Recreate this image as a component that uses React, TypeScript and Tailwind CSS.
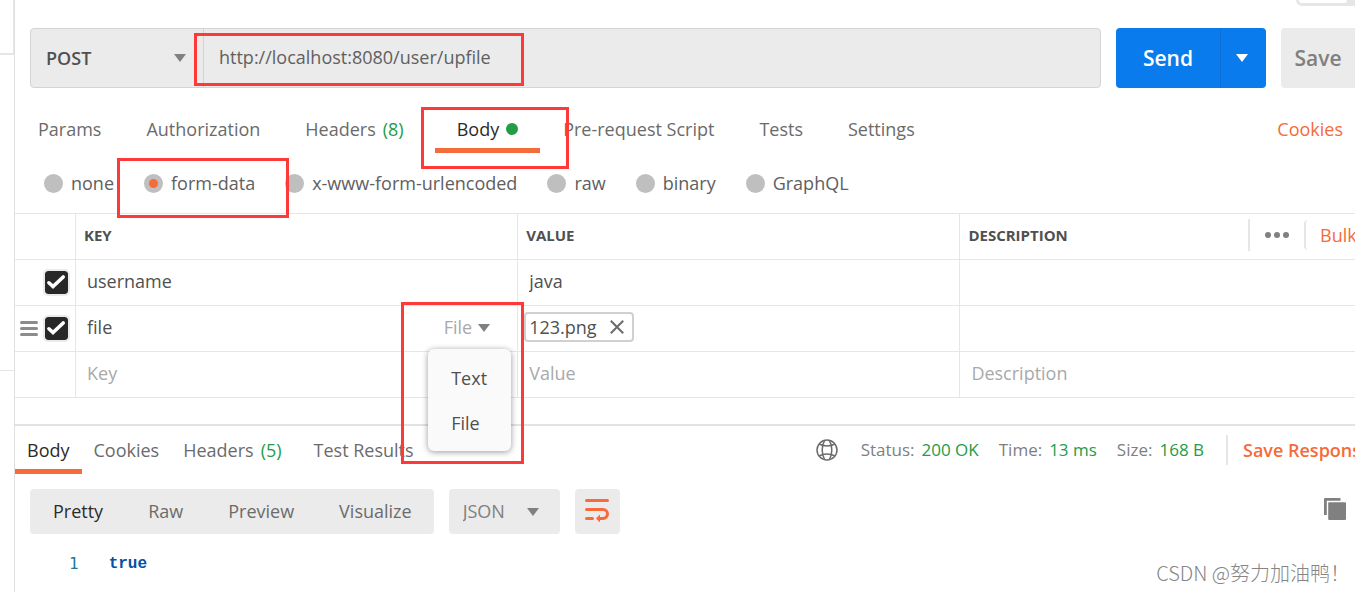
import { useState } from "react";
import type { ReactNode } from "react";

const requestTabs = [
  { label: "Params" },
  { label: "Authorization" },
  { label: "Headers", count: 8 },
  { label: "Body", dot: true },
  { label: "Pre-request Script" },
  { label: "Tests" },
  { label: "Settings" },
];

const bodyModes = ["none", "form-data", "x-www-form-urlencoded", "raw", "binary", "GraphQL"];

const responseTabs = [
  { label: "Body" },
  { label: "Cookies" },
  { label: "Headers", count: 5 },
  { label: "Test Results" },
];

const stats = [
  { label: "Status:", value: "200 OK" },
  { label: "Time:", value: "13 ms" },
  { label: "Size:", value: "168 B" },
];

const views = ["Pretty", "Raw", "Preview", "Visualize"];

function Caret({ className = "" }: { className?: string }) {
  return (
    <svg viewBox="0 0 12 8" className={`h-2 w-3 shrink-0 ${className}`} aria-hidden="true">
      <path d="M0 0h12L6 8z" fill="currentColor" />
    </svg>
  );
}

function Mark({ className }: { className: string }) {
  return (
    <div
      aria-hidden="true"
      className={`pointer-events-none absolute z-20 border-3 border-[#ff3838] ${className}`}
    />
  );
}

function GlobeIcon() {
  return (
    <svg
      viewBox="0 0 22 22"
      className="size-[22px] shrink-0"
      fill="none"
      stroke="#6b6b6b"
      strokeWidth="1.5"
      aria-hidden="true"
    >
      <circle cx="11" cy="11" r="10" />
      <path d="M8.600 1.300C5.400 7 5.400 15 8.600 20.700M13.400 1.300c3.200 5.700 3.200 13.700 0 19.400" />
      <path d="M2.800 5c4.800 2.200 11.600 2.200 16.400 0M2.800 17c4.800-2.200 11.600-2.200 16.400 0" />
    </svg>
  );
}

function WrapIcon() {
  return (
    <svg viewBox="0 0 24 24" className="size-6" fill="none" stroke="#f76b3a" strokeWidth="3" strokeLinecap="round">
      <path d="M1.500 2.500h21M1.500 11.500h16.500a4.500 4.500 0 0 1 0 9h-3M1.500 20.500h6" />
      <path d="M11 20.500l4-4v8z" fill="#f76b3a" stroke="none" />
    </svg>
  );
}

function CopyIcon() {
  return (
    <svg viewBox="0 0 22 22" className="size-[22px]" fill="#808080">
      <path d="M1 0h15.500v2.800H2.800v14.200H0V1a1 1 0 0 1 1-1z" />
      <rect x="4.200" y="4.200" width="17.800" height="17.800" rx="1" />
    </svg>
  );
}

function RowCheck({ label }: { label: string }) {
  return (
    <label className="relative block size-[23px]">
      <input
        type="checkbox"
        defaultChecked
        aria-label={label}
        className="block size-[23px] appearance-none rounded-[3px] bg-white outline-2 outline-[#ebebeb] checked:bg-[#282828]"
      />
      <svg
        viewBox="0 0 23 23"
        className="pointer-events-none absolute inset-0"
        fill="none"
        stroke="#fff"
        strokeWidth="3.600"
        strokeLinecap="round"
        strokeLinejoin="miter"
      >
        <path d="M3.900 11.800L8 15.600 18.200 6" />
      </svg>
    </label>
  );
}

function Tab({ active, wide, onClick, children }: { active: boolean; wide?: boolean; onClick: () => void; children: ReactNode }) {
  return (
    <button
      type="button"
      onClick={onClick}
      className={`flex h-12 shrink-0 items-center gap-[7px] border-y-5 border-t-transparent whitespace-nowrap ${
        wide ? "px-[22px]" : "px-3"
      } ${active ? "border-b-[#f56b3a] text-[#2b2b2b]" : "border-b-transparent text-[#6b6b6b]"}`}
    >
      {children}
    </button>
  );
}

function Field({ label, value, placeholder }: { label: string; value?: string; placeholder?: string }) {
  return (
    <input
      aria-label={label}
      defaultValue={value}
      placeholder={placeholder}
      className="h-11 w-full bg-transparent pb-1 pl-[11px] outline-none placeholder:text-[#a9a9a9]"
    />
  );
}

function FormTable() {
  const [menuOpen, setMenuOpen] = useState(true);
  const head = "border-y border-l border-[#e6e6e6] pt-0 pr-0 pb-[3px] pl-2 text-left text-[15px] font-bold text-[#505050]";
  const cell = "border-b border-l border-[#e6e6e6] p-0";

  return (
    <table className="w-full table-fixed border-separate border-spacing-0 text-[#505050]">
      <colgroup>
        <col className="w-[60px]" />
        <col className="w-[33%]" />
        <col className="w-[33%]" />
        <col />
      </colgroup>
      <thead>
        <tr className="h-[47px]">
          <th className="border-y border-[#e6e6e6]" />
          <th className={head}>KEY</th>
          <th className={head}>VALUE</th>
          <th className={head}>
            <div className="flex items-center justify-between">
              DESCRIPTION
              <div className="flex w-[107px] shrink-0 items-center overflow-hidden text-lg font-normal">
                <button type="button" aria-label="More" className="flex h-8 w-14 shrink-0 items-center gap-[3px] border-l-2 border-[#e6e6e6] pl-[15px]">
                  <span className="size-[6px] rounded-full bg-[#808080]" />
                  <span className="size-[6px] rounded-full bg-[#808080]" />
                  <span className="size-[6px] rounded-full bg-[#808080]" />
                </button>
                <button type="button" className="h-[30px] shrink-0 rounded border-l-2 border-[#e6e6e6] pl-[14px] whitespace-nowrap text-[#f56b3a]">
                  Bulk Edit
                </button>
              </div>
            </div>
          </th>
        </tr>
      </thead>
      <tbody>
        <tr className="h-[46px]">
          <td className="border-b border-[#e6e6e6] p-0">
            <div className="flex justify-end pr-[7px]">
              <RowCheck label="Enable username" />
            </div>
          </td>
          <td className={cell}><Field label="Key 1" value="username" /></td>
          <td className={cell}><Field label="Value 1" value="java" /></td>
          <td className={cell} />
        </tr>
        <tr className="h-[46px]">
          <td className="border-b border-[#e6e6e6] p-0">
            <div className="flex items-center justify-end gap-[7px] pr-[7px]">
              <span className="flex w-[18px] flex-col gap-[3px]">
                <span className="h-[3px] rounded bg-[#8c8c8c]" />
                <span className="h-[3px] rounded bg-[#8c8c8c]" />
                <span className="h-[3px] rounded bg-[#8c8c8c]" />
              </span>
              <RowCheck label="Enable file" />
            </div>
          </td>
          <td className={`${cell} relative`}>
            <div className="flex items-center">
              <Field label="Key 2" value="file" />
              <button
                type="button"
                aria-expanded={menuOpen}
                onClick={() => setMenuOpen(!menuOpen)}
                className="flex shrink-0 items-center gap-[6px] pr-[27px] pb-1 text-[#a9a9a9]"
              >
                File
                <Caret className="mt-[2px] text-[#808080]" />
              </button>
            </div>
            {menuOpen && (
              <div role="menu" className="absolute top-[43px] right-[6px] z-10 w-[83px] rounded-md bg-[#fafafa] py-[6px] shadow-[0_1px_6px_rgba(0,0,0,0.4)]">
                <button type="button" role="menuitem" className="block h-[45px] w-full pl-[23px] text-left">Text</button>
                <button type="button" role="menuitem" className="block h-[45px] w-full pl-[23px] text-left">File</button>
              </div>
            )}
            <Mark className="-top-[4px] -right-[7px] h-[162px] w-[123px]" />
          </td>
          <td className="border-b border-l border-[#e6e6e6] pt-0 pr-0 pb-[3px] pl-[6px]">
            <div className="flex h-[30px] w-fit items-center gap-[13px] rounded border-2 border-[#d0d0d0] pr-2 pb-px pl-[3px]">
              123.png
              <button type="button" aria-label="Remove file">
                <svg viewBox="0 0 14 14" className="size-[14px]" stroke="#6b6b6b" strokeWidth="2">
                  <path d="M.8.8l12.400 12.400M13.200.8L.8 13.200" />
                </svg>
              </button>
            </div>
          </td>
          <td className={cell} />
        </tr>
        <tr className="h-[46px]">
          <td className="border-b border-[#e6e6e6] p-0" />
          <td className={cell}><Field label="New key" placeholder="Key" /></td>
          <td className={cell}><Field label="New value" placeholder="Value" /></td>
          <td className={cell}><Field label="New description" placeholder="Description" /></td>
        </tr>
      </tbody>
    </table>
  );
}

export default function App() {
  const [tab, setTab] = useState("Body");
  const [mode, setMode] = useState("form-data");
  const [resTab, setResTab] = useState("Body");
  const [view, setView] = useState("Pretty");

  return (
    <div className="relative flex min-h-screen overflow-hidden bg-white font-['Open_Sans',sans-serif] text-lg leading-6">
      <aside className="flex w-[15px] shrink-0 flex-col border-r border-[#e0e0e0]">
        <div className="h-[55px] border-r border-b-2 border-[#e6e6e6]" />
        <div className="h-[316px] border-b border-[#e6e6e6]" />
      </aside>

      <main className="min-w-0 flex-1">
        <div className="flex h-7 items-start justify-end">
          <div className="h-[6px] w-[59px] rounded-bl-md bg-[#e6e6e6] pl-[3px]">
            <div className="h-[3px] w-12 rounded-b bg-white" />
          </div>
        </div>

        <div className="flex gap-[15px] pl-[15px]">
          <div className="relative flex h-[60px] min-w-0 flex-1 rounded border border-[#d4d4d4] bg-[#ebebeb]">
            <div className="relative flex w-[173px] shrink-0 items-center border-r border-[#d4d4d4]">
              <select aria-label="Method" className="h-full w-full appearance-none pl-[15px] font-semibold text-[#505050] outline-none">
                <option>POST</option>
                <option>GET</option>
              </select>
              <Caret className="pointer-events-none absolute right-[17px] text-[#808080]" />
            </div>
            <input
              aria-label="Request URL"
              defaultValue="http://localhost:8080/user/upfile"
              className="min-w-0 flex-1 px-[15px] pb-[2px] text-[#606060] outline-none"
            />
            <Mark className="top-[4px] left-[163px] h-[53px] w-[330px]" />
          </div>
          <div className="flex h-[60px] w-[150px] shrink-0 rounded bg-[#097bed] text-white">
            <button type="button" className="flex-1 text-[21px] font-semibold">Send</button>
            <button type="button" aria-label="Send options" className="flex w-[46px] items-center border-l border-[#0a6fd6] pl-[15px]">
              <Caret />
            </button>
          </div>
          <button type="button" className="h-[60px] w-[74px] shrink-0 rounded-l bg-[#ebebeb] text-[21px] font-semibold text-[#808080]">
            Save
          </button>
        </div>

        <div className="relative mt-[17px] flex gap-px pr-3 pl-px">
          {requestTabs.map((t) => (
            <Tab key={t.label} wide active={tab === t.label} onClick={() => setTab(t.label)}>
              {t.label}
              {t.count && <span className="mr-2 text-[#249c47]">({t.count})</span>}
              {t.dot && <span className="size-3 rounded-full bg-[#249c47]" />}
            </Tab>
          ))}
          <a href="#cookies" className="ml-auto self-center text-[#f56b3a]">Cookies</a>
          <Mark className="top-[2px] left-[406px] h-[62px] w-[148px]" />
        </div>

        <fieldset className="relative flex h-[60px] items-center gap-[30px] pl-[29px] text-[#606060]">
          {bodyModes.map((m) => (
            <label key={m} className="flex items-center gap-2">
              <input
                type="radio"
                name="mode"
                checked={mode === m}
                onChange={() => setMode(m)}
                className="size-[19px] appearance-none rounded-full border-5 border-[#bfbfbf] bg-[#bfbfbf] checked:bg-[#f56b3a]"
              />
              {m}
            </label>
          ))}
          <Mark className="top-[5px] left-[102px] h-[60px] w-[172px]" />
        </fieldset>

        <FormTable />

        <div className="mt-[26px] flex border-t-2 border-[#e2e2e2]">
          {responseTabs.map((t) => (
            <Tab key={t.label} active={resTab === t.label} onClick={() => setResTab(t.label)}>
              {t.label}
              {t.count && <span className="mr-2 text-[#249c47]">({t.count})</span>}
            </Tab>
          ))}
          <div className="ml-auto flex shrink-0 items-center">
            <GlobeIcon />
            <dl className="ml-[23px] flex gap-5 text-[17px]">
              {stats.map((s) => (
                <div key={s.label} className="flex gap-[7px]">
                  <dt className="text-[#808080]">{s.label}</dt>
                  <dd className="text-[#249c47]">{s.value}</dd>
                </div>
              ))}
            </dl>
            <div className="ml-[22px] flex h-[30px] w-[129px] items-center overflow-hidden border-l-2 border-[#e6e6e6] pl-[15px]">
              <button type="button" className="shrink-0 font-semibold whitespace-nowrap text-[#f56b3a]">Save Response</button>
            </div>
          </div>
        </div>

        <div className="mt-[15px] flex h-[45px] items-center gap-[15px] pr-[9px] pl-[15px]">
          <div className="flex h-full gap-px rounded bg-[#ebebeb] pl-px">
            {views.map((v) => (
              <button
                key={v}
                type="button"
                onClick={() => setView(v)}
                className={`px-[22px] pb-[2px] ${view === v ? "text-[#2b2b2b]" : "text-[#6b6b6b]"}`}
              >
                {v}
              </button>
            ))}
          </div>
          <div className="relative flex h-full w-[111px] items-center rounded bg-[#ebebeb]">
            <select aria-label="Format" className="h-full w-full appearance-none pb-[2px] pl-[14px] text-[#808080] outline-none">
              <option>JSON</option>
              <option>XML</option>
            </select>
            <Caret className="pointer-events-none absolute right-[21px] text-[#808080]" />
          </div>
          <button type="button" aria-label="Wrap lines" className="flex h-full w-[45px] items-center justify-center rounded bg-[#ebebeb] pb-[3px]">
            <WrapIcon />
          </button>
          <button type="button" aria-label="Copy" className="mb-[6px] ml-auto">
            <CopyIcon />
          </button>
        </div>

        <pre className="mt-[18px] flex gap-[30px] pl-[54px] font-['DejaVu_Sans_Mono',monospace] text-base leading-6">
          <span className="text-[#237893]">1</span>
          <code className="font-bold text-[#0451a5]">true</code>
        </pre>
      </main>

      <p className="absolute right-[5px] bottom-[5px] font-['Noto_Sans_CJK_SC',sans-serif] text-xl leading-7 font-light text-[#858585]">
        CSDN @努力加油鸭！
      </p>
    </div>
  );
}
